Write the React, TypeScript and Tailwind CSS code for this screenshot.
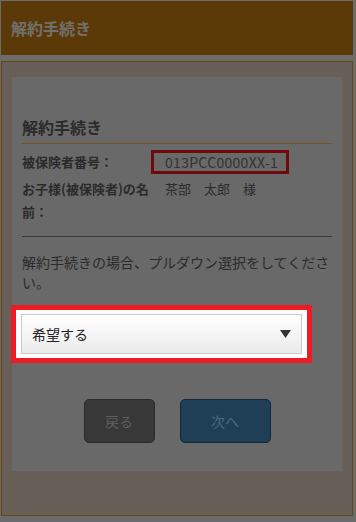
import React from 'react';

const jp = { fontFamily: '"Noto Sans CJK JP", "Noto Sans", sans-serif' };

export default function App() {
  return (
    <div className="min-h-[522px] w-[356px] bg-[#6b6b6b] pt-[1px]" style={jp}>
      <header className="ml-[1px] flex h-[54px] w-[352px] items-center bg-[#5c3a08] pl-[10px]">
        <h1 className="text-[16px] font-bold leading-none text-[#707070]">解約手続き</h1>
      </header>

      <main className="ml-[1px] mt-[6px] w-[352px] border border-[#6b4510] bg-[#685f58] px-[10px] pb-[44px] pt-[15px]">
        <section className="bg-[#696969] px-[10px] pb-[28px] pt-[38px] text-[#2b2b2b]">
          <h2 className="border-b border-[#7a5320] pb-[4px] text-[16px] font-bold leading-[24px]">解約手続き</h2>

          <dl className="mt-[6px] text-[13px]">
            <div className="flex">
              <dt className="w-[129px] shrink-0 font-bold leading-[24px]">被保険者番号：</dt>
              <dd className="border-[3px] border-[#6e0a0c] pl-[11px] pr-[8px] text-[14px] leading-[18px] tracking-[0.3px] text-[#333]">
                013PCC0000XX-1
              </dd>
            </div>
            <div className="mt-[3px] flex leading-[23px]">
              <dt className="w-[129px] shrink-0 font-bold">お子様(被保険者)の名前：</dt>
              <dd className="pl-[14px]">茶部　太郎　様</dd>
            </div>
          </dl>

          <div className="mt-[13px] border-t border-[#3a3a3a]" />

          <p className="mt-[15px] text-[14px] leading-[20px]">解約手続きの場合、プルダウン選択をしてください。</p>

          <div className="ml-[-11px] mt-[13px] w-[301px] border-[5px] border-[#ed1c24] bg-white px-[5px] py-[4px]">
            <div className="flex h-[40px] items-center justify-between border border-[#c9c9c9] bg-gradient-to-b from-white to-[#ebebeb] pl-[10px] pr-[10px]">
              <span className="text-[14px] text-[#222]">希望する</span>
              <svg width="11" height="8" viewBox="0 0 11 8">
                <path d="M0 0 H11 L5.5 8 Z" fill="#333" />
              </svg>
            </div>
          </div>

          <div className="mt-[36px] flex justify-center gap-[25px]">
            <button className="h-[44px] w-[71px] rounded-[5px] border border-[#2a2a2a] bg-[#383838] text-[14px] text-[#5e5e5e]">
              戻る
            </button>
            <button className="h-[44px] w-[91px] rounded-[5px] border border-[#10293a] bg-[#1e3f55] text-[14px] text-[#4b6a80]">
              次へ
            </button>
          </div>
        </section>
      </main>
    </div>
  );
}
